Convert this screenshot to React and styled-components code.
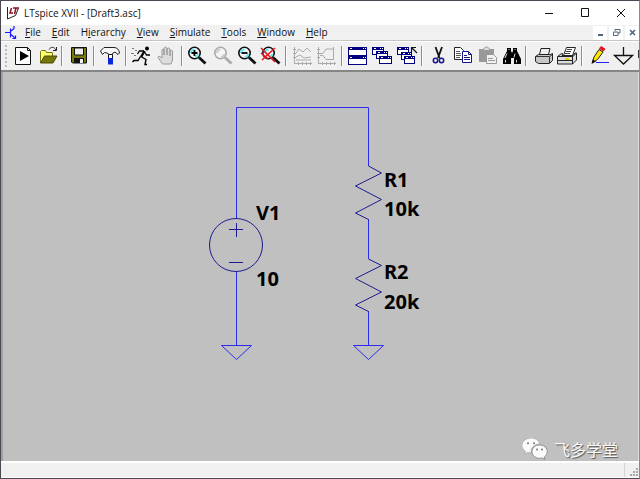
import React from "react";
import styled, { createGlobalStyle } from "styled-components";

const App = () => {
  return (
    <>
      <GlobalStyle />
      <Frame>
        <TitleBar>
          <Logo viewBox="0 0 14 14">
            <path d="M1.500 1.500H13L9.500 9.500 1.500 13.500Z" fill="#fff" />
            <path d="M1.500 1v12l8-3.500L12.500 2" fill="none" stroke="#222" />
            <path d="M5.500 2 4 7h3M7 2h6M10 2 8.500 8" fill="none" stroke="#8b1020" strokeWidth="1.500" />
          </Logo>
          <Title>LTspice XVII - [Draft3.asc]</Title>
          <WindowButton aria-label="Minimize">
            <svg width="12" height="12"><path d="M2 6.500h8" stroke="#111" /></svg>
          </WindowButton>
          <WindowButton aria-label="Maximize">
            <svg width="12" height="12"><path d="M2.500 1.500h7v8h-7z" fill="none" stroke="#111" /></svg>
          </WindowButton>
          <WindowButton aria-label="Close">
            <svg width="12" height="12"><path d="m2 2 8 8M10 2 2 10" stroke="#111" /></svg>
          </WindowButton>
        </TitleBar>

        <MenuBar>
          <MenuLogo viewBox="0 0 12 14">
            <path d="M0 6.500h5M5.500 2.500v9M6 5l3-2.500V0M6 8.500l4.500 4M10.500 9.500v3h-3" fill="none" stroke="#1b1bff" strokeWidth="1.200" />
          </MenuLogo>
          {menus.map(([before, key, after]) => (
            <MenuItem key={before + key + after}>
              {before}<u>{key}</u>{after}
            </MenuItem>
          ))}
          <ChildButtons>
            <ChildButton aria-label="Minimize document">
              <svg width="9" height="9"><path d="M2 7h5" stroke="#52657c" strokeWidth="2" /></svg>
            </ChildButton>
            <ChildButton aria-label="Restore document">
              <svg width="9" height="9"><path d="M3 3V1.500h5V5H6M1.500 4h4.500v3.500H1.500z" fill="none" stroke="#52657c" /></svg>
            </ChildButton>
            <ChildButton aria-label="Close document">
              <svg width="9" height="9"><path d="m2 2 5 5M7 2 2 7" stroke="#52657c" strokeWidth="1.600" /></svg>
            </ChildButton>
          </ChildButtons>
        </MenuBar>

        <Toolbar>
          <Grip />
          {toolGroups.map((group, i) => (
            <Group key={i}>
              {group.map(([label, icon, disabled]) => (
                <Tool key={label} aria-label={label} title={label} disabled={disabled}>
                  <svg width="24" height="24" fill="none">{icon}</svg>
                </Tool>
              ))}
            </Group>
          ))}
        </Toolbar>

        <Canvas>
          <Schematic />
          <Watermark>
            <WeChat viewBox="0 0 26 22">
              <path d="M9 0C4 0 0 3.300 0 7.500 0 10 1.300 12 3.400 13.300L2.600 16l3.200-1.600c1 .3 2 .4 3.400.4C8.500 9.500 12.500 6 17.800 6 17 2.500 13.500 0 9 0Z" fill="#fafafa" stroke="#999" strokeWidth=".6" />
              <path d="M17.600 7c-4.300 0-7.600 2.900-7.600 6.600s3.300 6.700 7.600 6.700c1 0 1.900-.2 2.700-.4L23 21.300l-.7-2.400c1.800-1.300 2.900-3.100 2.900-5.300C25.200 9.900 21.900 7 17.600 7Z" fill="#fafafa" stroke="#777" strokeWidth=".7" />
              <g fill="#777">
                <circle cx="6" cy="5.300" r="1" /><circle cx="12" cy="5.300" r="1" />
                <circle cx="15" cy="11.500" r="1" /><circle cx="20" cy="11.500" r="1" />
              </g>
            </WeChat>
            飞多学堂
          </Watermark>
        </Canvas>

        <StatusBar>
          <StatusPane />
          <SizeGrip width="9" height="9">
            <path d="M7 1h2M4 4h2M7 4h2M1 7h2M4 7h2M7 7h2" stroke="#aaa" strokeWidth="2" />
          </SizeGrip>
        </StatusBar>
      </Frame>
    </>
  );
};

const Schematic = () => (
  <Drawing width="440" height="300" fill="none">
    {/* wires */}
    <path d="M233.500 147V35.500h132V94M233.500 199v74M365.500 147v40M365.500 239v34" stroke="#2b2bf0" />
    {/* grounds */}
    <path d="M218.500 273.500h30l-15 14zM350.500 273.500h30l-15 14z" stroke="#2b2bf0" />
    {/* voltage source */}
    <circle cx="233" cy="173" r="26.500" stroke="#1c1c90" />
    <path d="M226 157.500h14M233.500 151v14M226 190.500h14" stroke="#1c1c90" />
    {/* resistors */}
    <path d="M365.500 94 378.500 101 352.500 114 378.500 127.500 352.500 141 365.500 147.500" stroke="#1c1c90" />
    <path d="M365.500 187 378.500 193.500 352.500 206.500 378.500 220 352.500 233 365.500 239.500" stroke="#1c1c90" />
    <g fill="#000">
      <text x="253" y="148">V1</text>
      <text x="253" y="214">10</text>
      <text x="381" y="115">R1</text>
      <text x="381" y="144">10k</text>
      <text x="381" y="207">R2</text>
      <text x="381" y="237">20k</text>
    </g>
  </Drawing>
);

const Lens = ({ x = 0, color = "#111", shine = "#5fe8f0", children }) => (
  <g transform={`translate(${x} 0)`}>
    <circle cx="8.500" cy="9" r="5.700" fill="#f4f4f4" stroke={color} strokeWidth="1.600" />
    <path d="M5 9c0-2 1.500-3.500 3.500-3.500M9 13c1.500 0 3-1.200 3.200-3" stroke={shine} strokeWidth="2" />
    <path d="m13 13.500 6.500 6" stroke={color} strokeWidth="2.800" />
    {children}
  </g>
);

const Pane = ({ x, y, w = 12, h = 7 }) => (
  <g>
    <rect x={x + 0.5} y={y + 0.5} width={w} height={h} fill="#fff" stroke="#000080" />
    <path d={`M${x} ${y + 1.5}h${w + 1}`} stroke="#000080" strokeWidth="3" />
    <path d={`M${x + 2} ${y + 1.5}h2M${x + w - 3} ${y + 1.5}h1M${x + w - 1} ${y + 1.5}h1`} stroke="#fff" />
  </g>
);

const menus = [
  ["", "F", "ile"],
  ["", "E", "dit"],
  ["H", "i", "erarchy"],
  ["", "V", "iew"],
  ["", "S", "imulate"],
  ["", "T", "ools"],
  ["", "W", "indow"],
  ["", "H", "elp"],
];

// label, drawing, disabled
const toolGroups = [
  [
    ["New schematic", <>
      <path d="M5.500 3.500h12l3 3v14h-15z" fill="#fff" stroke="#111" />
      <path d="M17.500 3.500v3h3" stroke="#111" />
      <path d="M10 7v10l9-5z" fill="#000" />
    </>],
    ["Open", <>
      <path d="M6.500 18.500v-11l1-1h4l1 2h6v4" fill="#ffff70" stroke="#77770c" />
      <path d="m6.500 19 4-7H23l-4 7z" fill="#77770c" stroke="#4c4c00" />
      <path d="M15 5.500c2-3 5-3 7 .5M22.500 3v3.500H19" stroke="#222" />
    </>],
  ],
  [
    ["Save", <>
      <path d="M5.500 3.500h15v15.500h-14l-1-1z" fill="#77770c" stroke="#111" />
      <path d="M8.500 4h9v7h-9z" fill="#eee" stroke="#111" />
      <path d="M8 14h10v5H8z" fill="#111" /><path d="M14 15h3v4h-3z" fill="#eee" />
    </>],
  ],
  [
    ["Control panel", <>
      <path d="M2.500 7 6 3.500h10c3 0 5 2 5.500 5.500l-1.500 1.500-3-2.500-2 1-1 1.500h-3L9 9 6.500 8.500l-2 2z" fill="#f7f7f7" stroke="#222" />
      <path d="M10.500 10.500h4v4h-4z" fill="#fff" stroke="#111" />
      <path d="M10 14h5v6.500h-5z" fill="#0b28d8" />
    </>],
  ],
  [
    ["Run", <>
      <circle cx="17" cy="4.500" r="2" fill="#000" />
      <path d="m14.500 7-3.500 6" stroke="#000" strokeWidth="2.400" />
      <path d="m11 12.500 5 3-1 5h2M10.500 12.500 8 16.500H4L2.500 18" stroke="#000" strokeWidth="1.400" />
      <path d="M14 7H9.500l-2 3M14.500 8l2 3H20" stroke="#000" strokeWidth="1.300" />
      <path d="M2 4.500h2M5 6.500h2M1 9.500h3M4 11.500h2" stroke="#777" />
    </>],
    ["Halt", <path d="M8.500 20 4 13.500l1-1.500 3 2V6l1-1 1 1v5-7l1.500-1L13 4v7-6l1.500-1L16 5v7-5l1.500-1 1 1v9L17 20z" fill="#ddd" stroke="#999" />, true],
  ],
  [
    ["Zoom in", <Lens><path d="M5.500 9h6M8.500 6v6" stroke="#000" strokeWidth="1.800" /></Lens>],
    ["Pan", <Lens x={2} color="#aaa" shine="#ccc" />, true],
    ["Zoom back", <Lens x={2}><path d="M5.500 9h6" stroke="#000" strokeWidth="1.800" /></Lens>],
    ["Zoom to fit", <><Lens x={2} /><path d="m3 4 14 14M17 4 4 16M3 9l7 6" stroke="#e8141c" strokeWidth="1.500" /></>],
  ],
  [
    ["Autorange", <>
      <path d="M4.500 3v17M4 19.500h18M3 5.500h3M3 9.500h3M3 13.500h3M8.500 18v3M12.500 18v3M16.500 18v3M20.500 18v3" stroke="#aaa" />
      <path d="m6 9 3-4 4 3 4-4 4 4M6 13l4-2 4 3 7-1M6 16h15" stroke="#aaa" />
    </>, true],
    ["Eye diagram", <>
      <path d="M4.500 3v17M4 19.500h18M3 5.500h3M3 9.500h3M3 13.500h3M8.500 18v3M12.500 18v3M16.500 18v3M20.500 18v3" stroke="#aaa" />
      <path d="M6 9.500h3l3-4.500h8M6 11.500h3l3 4h8M19.500 3v13" stroke="#aaa" />
    </>, true],
  ],
  [
    ["Tile", <><Pane x={2} y={3} w={18} h={8} /><Pane x={2} y={12} w={18} h={8} /></>],
    ["Cascade", <><Pane x={2} y={3} w={11} /><Pane x={6} y={7} w={11} /><Pane x={9} y={12} /></>],
    ["Close all", <>
      <Pane x={3} y={3} w={11} /><Pane x={7} y={8} w={10} /><Pane x={10} y={12} w={10} />
      <path d="M17.500 8V3.500H22M18 4l5 5" stroke="#111" strokeWidth="1.200" />
    </>],
  ],
  [
    ["Cut", <>
      <path d="m9.500 3 4 11M16 3l-4 11" stroke="#111" strokeWidth="1.800" />
      <circle cx="9.500" cy="16.500" r="2.200" stroke="#15158c" strokeWidth="1.500" />
      <circle cx="15.500" cy="16.500" r="2.200" stroke="#15158c" strokeWidth="1.500" />
    </>],
    ["Copy", <>
      <path d="M4.500 3.500h6l3 3v9h-9z" fill="#fff" stroke="#222" />
      <path d="M6 7.500h4M6 9.500h5M6 11.500h5M6 13.500h4" stroke="#555" />
      <path d="M12.500 7.500h6l3 3v8h-9z" fill="#fff" stroke="#15158c" />
      <path d="M18.500 7.500v3h3M14 11.500h3M14 13.500h6M14 15.500h6" stroke="#15158c" />
    </>],
    ["Paste", <>
      <path d="M5 5h15v13H5z" fill="#999" /><path d="M9.500 6.500V5l2-2h2l2 2v1.500z" fill="#ddd" stroke="#999" />
      <path d="M12.500 10.500h7l3 3v6h-10z" fill="#f0f0f0" stroke="#999" />
      <path d="M14 14.500h5M14 16.500h7" stroke="#999" />
    </>, true],
    ["Find", <>
      <path d="M9 4h4v3l1 2 1-2V4h4v3l4 8v5h-7v-6h-3v6H5v-5l4-8z" fill="#000" />
      <path d="M9 9.500 7 14M17 9.500l-1 4M7.500 16v2.500M18.500 16v2.500M11 5v1M17 5v1" stroke="#ddd" />
    </>],
  ],
  [
    ["Print setup", <>
      <path d="M9.500 10.500 11 4.500h9l-1.500 6" fill="#eee" stroke="#222" />
      <path d="m5.500 12.500 3-2h12l2-1v7l-3 3h-11l-3-2z" fill="#c7c7c7" stroke="#222" />
      <path d="M5.500 12.500h14l3-2M19.500 13v6" stroke="#333" />
    </>],
    ["Print", <>
      <path d="M9.500 11.500 12.500 3.500h9l-3 8" fill="#fff" stroke="#222" />
      <path d="M13 5.500h5M12 7.500h5M11 9.500h5" stroke="#444" />
      <path d="m3.500 12.500 4-3h1l-.500 2h11l2-2.500h1.500v7l-4 4h-15z" fill="#ddd" stroke="#222" />
      <path d="M4 12.500h15l3-3M18.500 13v7" stroke="#222" />
      <path d="M4 16.500h14" stroke="#222" /><path d="M11 15h4" stroke="#e2d000" strokeWidth="2" />
    </>],
  ],
  [
    ["Draw wire", <>
      <path d="M13 5.500 8 13l-1.500 5.500 5-3L17 8z" fill="#ffe800" stroke="#222" />
      <path d="m13.500 4.500 1.500-2 4 2.500-1.500 2z" fill="#e8141c" stroke="#e8141c" />
      <path d="m5.500 20 1-4.500 3.500 2z" fill="#111" />
      <path d="M10 18.500h13" stroke="#2222ff" />
    </>],
    ["Ground", <path d="M13.500 3v8M4.500 11.500h18l-9 8.500z" stroke="#111" strokeWidth="1.300" />],
    ["Label net", <path d="M4 6h16v8H4z" fill="#333" />],
  ],
];

const GlobalStyle = createGlobalStyle`
  body {
    margin: 0;
    font-family: "Open Sans", "Noto Sans", sans-serif;
    font-size: 10px;
    color: #111;
  }
  *, *::before {
    box-sizing: border-box;
  }
  button {
    border: 0;
    padding: 0;
    background: none;
    font: inherit;
    color: inherit;
  }
`;

const Frame = styled.div`
  display: flex;
  flex-direction: column;
  height: 100vh;
  border: 1px solid #4b4851;
  border-right-color: #8a8a8a;
  background: #f0f0f0;
  overflow: hidden;
`;

const TitleBar = styled.header`
  display: flex;
  align-items: center;
  height: 24px;
  flex-shrink: 0;
  padding-left: 5px;
  background: #fff;
`;

const Logo = styled.svg`
  width: 14px;
  height: 14px;
`;

const Title = styled.h1`
  flex: 1;
  margin: 0 0 0 4px;
  font-size: 10px;
  font-weight: 400;
`;

const WindowButton = styled.button`
  display: flex;
  align-items: center;
  justify-content: center;
  width: 36px;
  height: 24px;
  &:hover {
    background: #e5e5e5;
  }
`;

const MenuBar = styled.nav`
  display: flex;
  align-items: center;
  height: 15px;
  flex-shrink: 0;
  padding-left: 4px;
`;

const MenuLogo = styled.svg`
  width: 12px;
  height: 14px;
  margin-right: 2px;
`;

const MenuItem = styled.button`
  padding: 0 5px 0 6px;
  line-height: 15px;
  &:hover {
    background: #cce8ff;
  }
  u {
    text-decoration-thickness: 1px;
    text-decoration-skip-ink: none;
    text-underline-offset: 1px;
  }
`;

const ChildButtons = styled.div`
  display: flex;
  gap: 2px;
  margin-left: auto;
`;

const ChildButton = styled.button`
  display: flex;
  align-items: center;
  justify-content: center;
  width: 14px;
  height: 14px;
  background: #fff;
`;

const Toolbar = styled.div`
  display: flex;
  align-items: center;
  height: 32px;
  flex-shrink: 0;
  border-top: 1px solid #c4c4c4;
  border-bottom: 2px solid #858585;
  box-shadow: inset 0 1px #fff;
  overflow: hidden;
`;

const Grip = styled.div`
  width: 2px;
  height: 22px;
  margin: 0 3px 0 4px;
  flex-shrink: 0;
  background: repeating-linear-gradient(#bbb 0 2px, #f0f0f0 2px 4px);
`;

const Group = styled.div`
  display: flex;
  align-items: center;
  flex-shrink: 0;
  & + &::before {
    content: "";
    width: 2px;
    height: 20px;
    margin: 0 3px;
    background: #8c8c8c;
    border-right: 1px solid #fff;
  }
`;

const Tool = styled.button`
  width: 24px;
  height: 24px;
  svg {
    display: block;
  }
`;

const Canvas = styled.main`
  position: relative;
  flex: 1;
  min-height: 0;
  border-left: 2px solid #a0a0a0;
  border-right: 1px solid #ddd;
  background: #c0c0c0;
  overflow: hidden;
`;

const Drawing = styled.svg`
  display: block;
  font: bold 20px "Noto Sans", sans-serif;
`;

const Watermark = styled.div`
  position: absolute;
  right: 20px;
  bottom: 1px;
  display: flex;
  align-items: center;
  gap: 6px;
  font: 16px/22px "Noto Sans CJK SC", sans-serif;
  color: #fafafa;
  text-shadow: 1px 1px 1px #555;
`;

const WeChat = styled.svg`
  width: 26px;
  height: 22px;
`;

const StatusBar = styled.footer`
  display: flex;
  align-items: flex-end;
  height: 17px;
  flex-shrink: 0;
  border-top: 2px solid #fff;
  border-bottom: 1px solid #fff;
`;

const StatusPane = styled.div`
  flex: 1;
  align-self: stretch;
  margin-right: 4px;
  border-right: 1px solid #d4d4d4;
`;

const SizeGrip = styled.svg`
  margin-right: 1px;
`;

export default App;
